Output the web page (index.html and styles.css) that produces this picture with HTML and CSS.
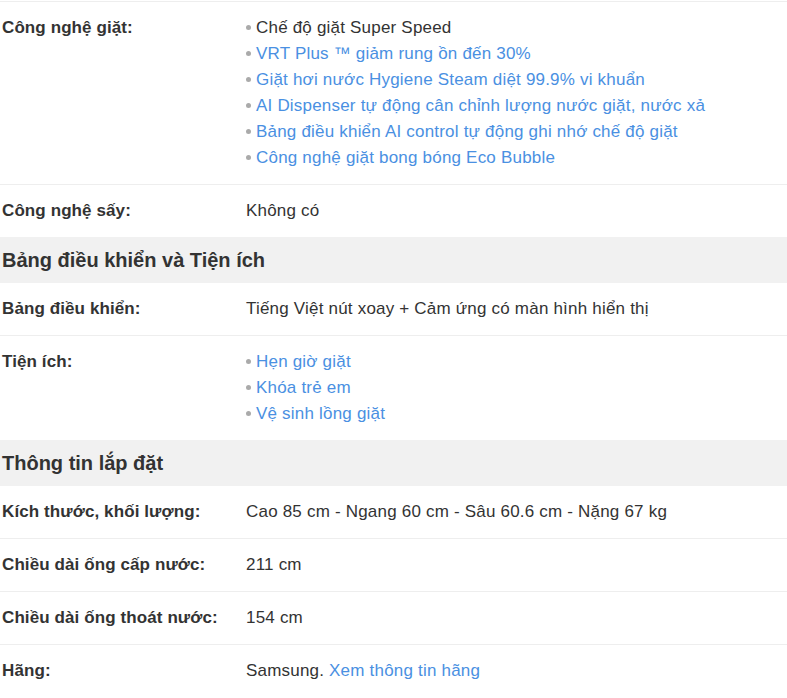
FILE: index.html
```html
<!DOCTYPE html>
<html lang="vi">
<head>
  <meta charset="UTF-8" />
  <meta name="viewport" content="width=device-width, initial-scale=1.0" />
  <title>Thông số kỹ thuật</title>
  <link rel="stylesheet" href="styles.css">
</head>
<body>
  <div class="specs">
    <div class="row">
      <div class="label">Công nghệ giặt:</div>
      <ul class="value list">
        <li>Chế độ giặt Super Speed</li>
        <li><a href="#">VRT Plus ™ giảm rung ồn đến 30%</a></li>
        <li><a href="#">Giặt hơi nước Hygiene Steam diệt 99.9% vi khuẩn</a></li>
        <li><a href="#">AI Dispenser tự động cân chỉnh lượng nước giặt, nước xả</a></li>
        <li><a href="#">Bảng điều khiển AI control tự động ghi nhớ chế độ giặt</a></li>
        <li><a href="#">Công nghệ giặt bong bóng Eco Bubble</a></li>
      </ul>
    </div>
    <div class="row">
      <div class="label">Công nghệ sấy:</div>
      <div class="value">Không có</div>
    </div>

    <h3 class="group">Bảng điều khiển và Tiện ích</h3>
    <div class="row">
      <div class="label">Bảng điều khiển:</div>
      <div class="value">Tiếng Việt nút xoay + Cảm ứng có màn hình hiển thị</div>
    </div>
    <div class="row">
      <div class="label">Tiện ích:</div>
      <ul class="value list">
        <li><a href="#">Hẹn giờ giặt</a></li>
        <li><a href="#">Khóa trẻ em</a></li>
        <li><a href="#">Vệ sinh lồng giặt</a></li>
      </ul>
    </div>

    <h3 class="group">Thông tin lắp đặt</h3>
    <div class="row">
      <div class="label">Kích thước, khối lượng:</div>
      <div class="value">Cao 85 cm - Ngang 60 cm - Sâu 60.6 cm - Nặng 67 kg</div>
    </div>
    <div class="row">
      <div class="label">Chiều dài ống cấp nước:</div>
      <div class="value">211 cm</div>
    </div>
    <div class="row">
      <div class="label">Chiều dài ống thoát nước:</div>
      <div class="value">154 cm</div>
    </div>
    <div class="row">
      <div class="label">Hãng:</div>
      <div class="value">Samsung. <a href="#">Xem thông tin hãng</a></div>
    </div>
  </div>
</body>
</html>
```

FILE: styles.css
```css
body {
  margin: 0;
  font-family: "Liberation Sans", Arial, sans-serif;
  font-size: 17px;
  letter-spacing: 0.2px;
  color: #333;
  background: #fff;
}
a {
  color: #4a90e2;
  text-decoration: none;
}
.specs {
  padding-top: 1px;
}
.row {
  display: grid;
  grid-template-columns: 244px 1fr;
  padding: 13px 0 13px 2px;
  border-top: 1px solid #eee;
  line-height: 26px;
}
.group + .row {
  border-top: none;
}
.label {
  font-weight: bold;
  letter-spacing: 0.1px;
}
.list {
  margin: 0;
  padding: 0;
  list-style: none;
}
.list li::before {
  content: "";
  display: inline-block;
  width: 5px;
  height: 5px;
  border-radius: 50%;
  background: #aaa;
  margin: 0 5px 3px 0;
  vertical-align: middle;
}
.group {
  margin: 0;
  padding: 10px 2px;
  background: #f1f1f1;
  font-size: 20px;
  line-height: 26px;
  letter-spacing: 0;
  font-weight: bold;
}
```
